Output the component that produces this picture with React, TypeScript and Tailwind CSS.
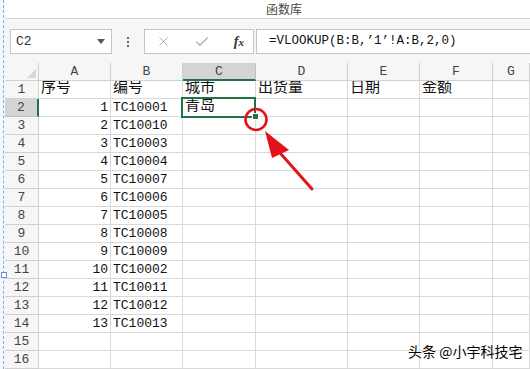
import { Check, X } from "lucide-react"

const font = "font-['Liberation_Mono','Noto_Sans_CJK_SC',monospace]"

const cols = [
  { key: "A", w: "w-[72px]" },
  { key: "B", w: "w-[72px]" },
  { key: "C", w: "w-[73px]" },
  { key: "D", w: "w-[92px]" },
  { key: "E", w: "w-[72px]" },
  { key: "F", w: "w-[73px]" },
  { key: "G", w: "flex-1" },
]

const codes = [
  "TC10001", "TC10010", "TC10003", "TC10004", "TC10007", "TC10006", "TC10005",
  "TC10008", "TC10009", "TC10002", "TC10011", "TC10012", "TC10013",
]

// row data: [A, B, C, D, E, F]
const rows: (string | number)[][] = [
  ["序号", "编号", "城市", "出货量", "日期", "金额"],
  ...codes.map((c, i) => [i + 1, c, i === 0 ? "青岛" : "", "", "", ""]),
  ["", "", "", "", "", ""],
  ["", "", "", "", "", ""],
]

function Cell({ value, w }: { value: string | number; w: string }) {
  const isNum = typeof value === "number"
  const isCjk = typeof value === "string" && /[\u4e00-\u9fff]/.test(value)
  return (
    <div
      className={`${w} h-[18px] shrink-0 border-r border-b border-[#d9d9d9] flex items-center overflow-hidden whitespace-nowrap text-[#111] ${
        isNum ? "justify-end pr-[2px]" : "pl-[2px]"
      } ${isCjk ? "text-[15px]" : "text-[13px]"}`}
    >
      {value}
    </div>
  )
}

export default function App() {
  return (
    <div className={`w-[530px] h-[369px] relative overflow-hidden bg-white flex ${font}`}>
      {/* window edge */}
      <div className="w-[5px] shrink-0 bg-[#f4f7fc] flex justify-end">
        <div className="w-[2px] border-l border-dashed border-[#8eabd8]" />
      </div>

      <div className="flex-1 flex flex-col">
        {/* ribbon bottom */}
        <div className="h-[19px] border-b border-[#d6d6d6] bg-white flex items-center pl-[261px]">
          <span className="text-[12px] text-[#444] font-['Noto_Sans_CJK_SC',sans-serif] leading-none">函数库</span>
        </div>

        {/* formula bar */}
        <div className="h-[44px] bg-[#f6f6f6] flex items-start pt-[10px]">
          <div className="ml-[5px] w-[102px] h-[25px] bg-white border border-[#c6c6c6] flex items-center pl-[5px] pr-[6px]">
            <span className="text-[13px] text-[#333] flex-1">C2</span>
            <svg width="8" height="5" viewBox="0 0 8 5">
              <polygon points="0,0 8,0 4,5" fill="#555" />
            </svg>
          </div>
          <div className="ml-[14px] w-[4px] h-[25px] flex flex-col items-center justify-center gap-[2px]">
            <div className="w-[2px] h-[2px] bg-[#666]" />
            <div className="w-[2px] h-[2px] bg-[#666]" />
            <div className="w-[2px] h-[2px] bg-[#666]" />
          </div>
          <div className="ml-[14px] w-[110px] h-[25px] bg-white border border-[#c6c6c6] flex items-center justify-between pl-[11px] pr-[9px]">
            <X size={15} strokeWidth={1.4} color="#a4a4a4" />
            <Check size={16} strokeWidth={2} color="#b0b0b0" />
            <span className="font-['Liberation_Serif',serif] italic font-bold text-[14px] text-[#333] leading-none">
              f<span className="text-[11px]">x</span>
            </span>
          </div>
          <div className="ml-[2px] -mr-[2px] flex-1 h-[25px] bg-white border border-[#c6c6c6] flex items-center pl-[12px]">
            <span className="text-[12.5px] text-[#111] whitespace-nowrap">=VLOOKUP(B:B,’1’!A:B,2,0)</span>
          </div>
        </div>

        {/* grid */}
        <div className="relative flex-1 flex flex-col">
          {/* column headers */}
          <div className="flex h-[18px] shrink-0">
            <div className="w-[34px] h-[18px] shrink-0 bg-[#f6f6f6] border-r border-b border-[#d0d0d0] flex items-end justify-end pr-[2px] pb-[2px]">
              <svg width="9" height="9" viewBox="0 0 9 9">
                <polygon points="9,0 9,9 0,9" fill="#d6d6d6" />
              </svg>
            </div>
            {cols.map((c) => (
              <div
                key={c.key}
                className={`${c.w} h-[18px] shrink-0 flex items-center justify-center text-[13px] leading-none text-[#444] ${
                  c.key === "C"
                    ? "bg-[#d4d4d4] border-b-2 border-b-[#217346] border-r border-r-[#c0c0c0]"
                    : "bg-[#f6f6f6] border-r border-b border-[#d0d0d0]"
                }`}
              >
                {c.key}
              </div>
            ))}
          </div>

          {rows.map((r, i) => (
            <div key={i} className="flex h-[18px] shrink-0">
              <div
                className={`w-[34px] h-[18px] shrink-0 flex items-center justify-center text-[13px] leading-none border-b text-[#444] ${
                  i === 1
                    ? "bg-[#d4d4d4] border-r-2 border-r-[#217346] border-b-[#c0c0c0]"
                    : "bg-[#f6f6f6] border-r border-[#d0d0d0]"
                }`}
              >
                {i + 1}
              </div>
              {cols.map((c, j) => (
                <Cell key={c.key} w={c.w} value={j < 6 ? r[j] : ""} />
              ))}
            </div>
          ))}

          {/* active cell outline */}
          <div className="absolute left-[176px] top-[34px] w-[75px] h-[21px] border-2 border-[#217346] pointer-events-none" />
          <div className="absolute left-[247px] top-[50px] w-[7px] h-[7px] bg-white pointer-events-none flex items-center justify-center">
            <div className="w-[5px] h-[5px] bg-[#217346]" />
          </div>
        </div>
      </div>

      {/* side handle */}
      <div className="absolute left-[1px] top-[272px] w-[6px] h-[6px] bg-white border border-[#6b8fc7]" />

      {/* annotation */}
      <svg className="absolute inset-0 pointer-events-none" width="530" height="369" viewBox="0 0 530 369">
        <circle cx="256" cy="119.5" r="10.5" fill="none" stroke="#e3131b" strokeWidth="2.6" />
        <line x1="281" y1="154" x2="312" y2="189" stroke="#e3131b" strokeWidth="3" strokeLinecap="round" />
        <polygon points="265,131 272,158 289,150" fill="#e3131b" />
      </svg>

      {/* watermark */}
      <div className="absolute left-[408px] top-[344px] text-[14px] leading-none text-black font-['Noto_Sans_CJK_SC',sans-serif] whitespace-nowrap [text-shadow:0_0_2px_#fff,0_0_2px_#fff]">
        头条 @小宇科技宅
      </div>
    </div>
  )
}
